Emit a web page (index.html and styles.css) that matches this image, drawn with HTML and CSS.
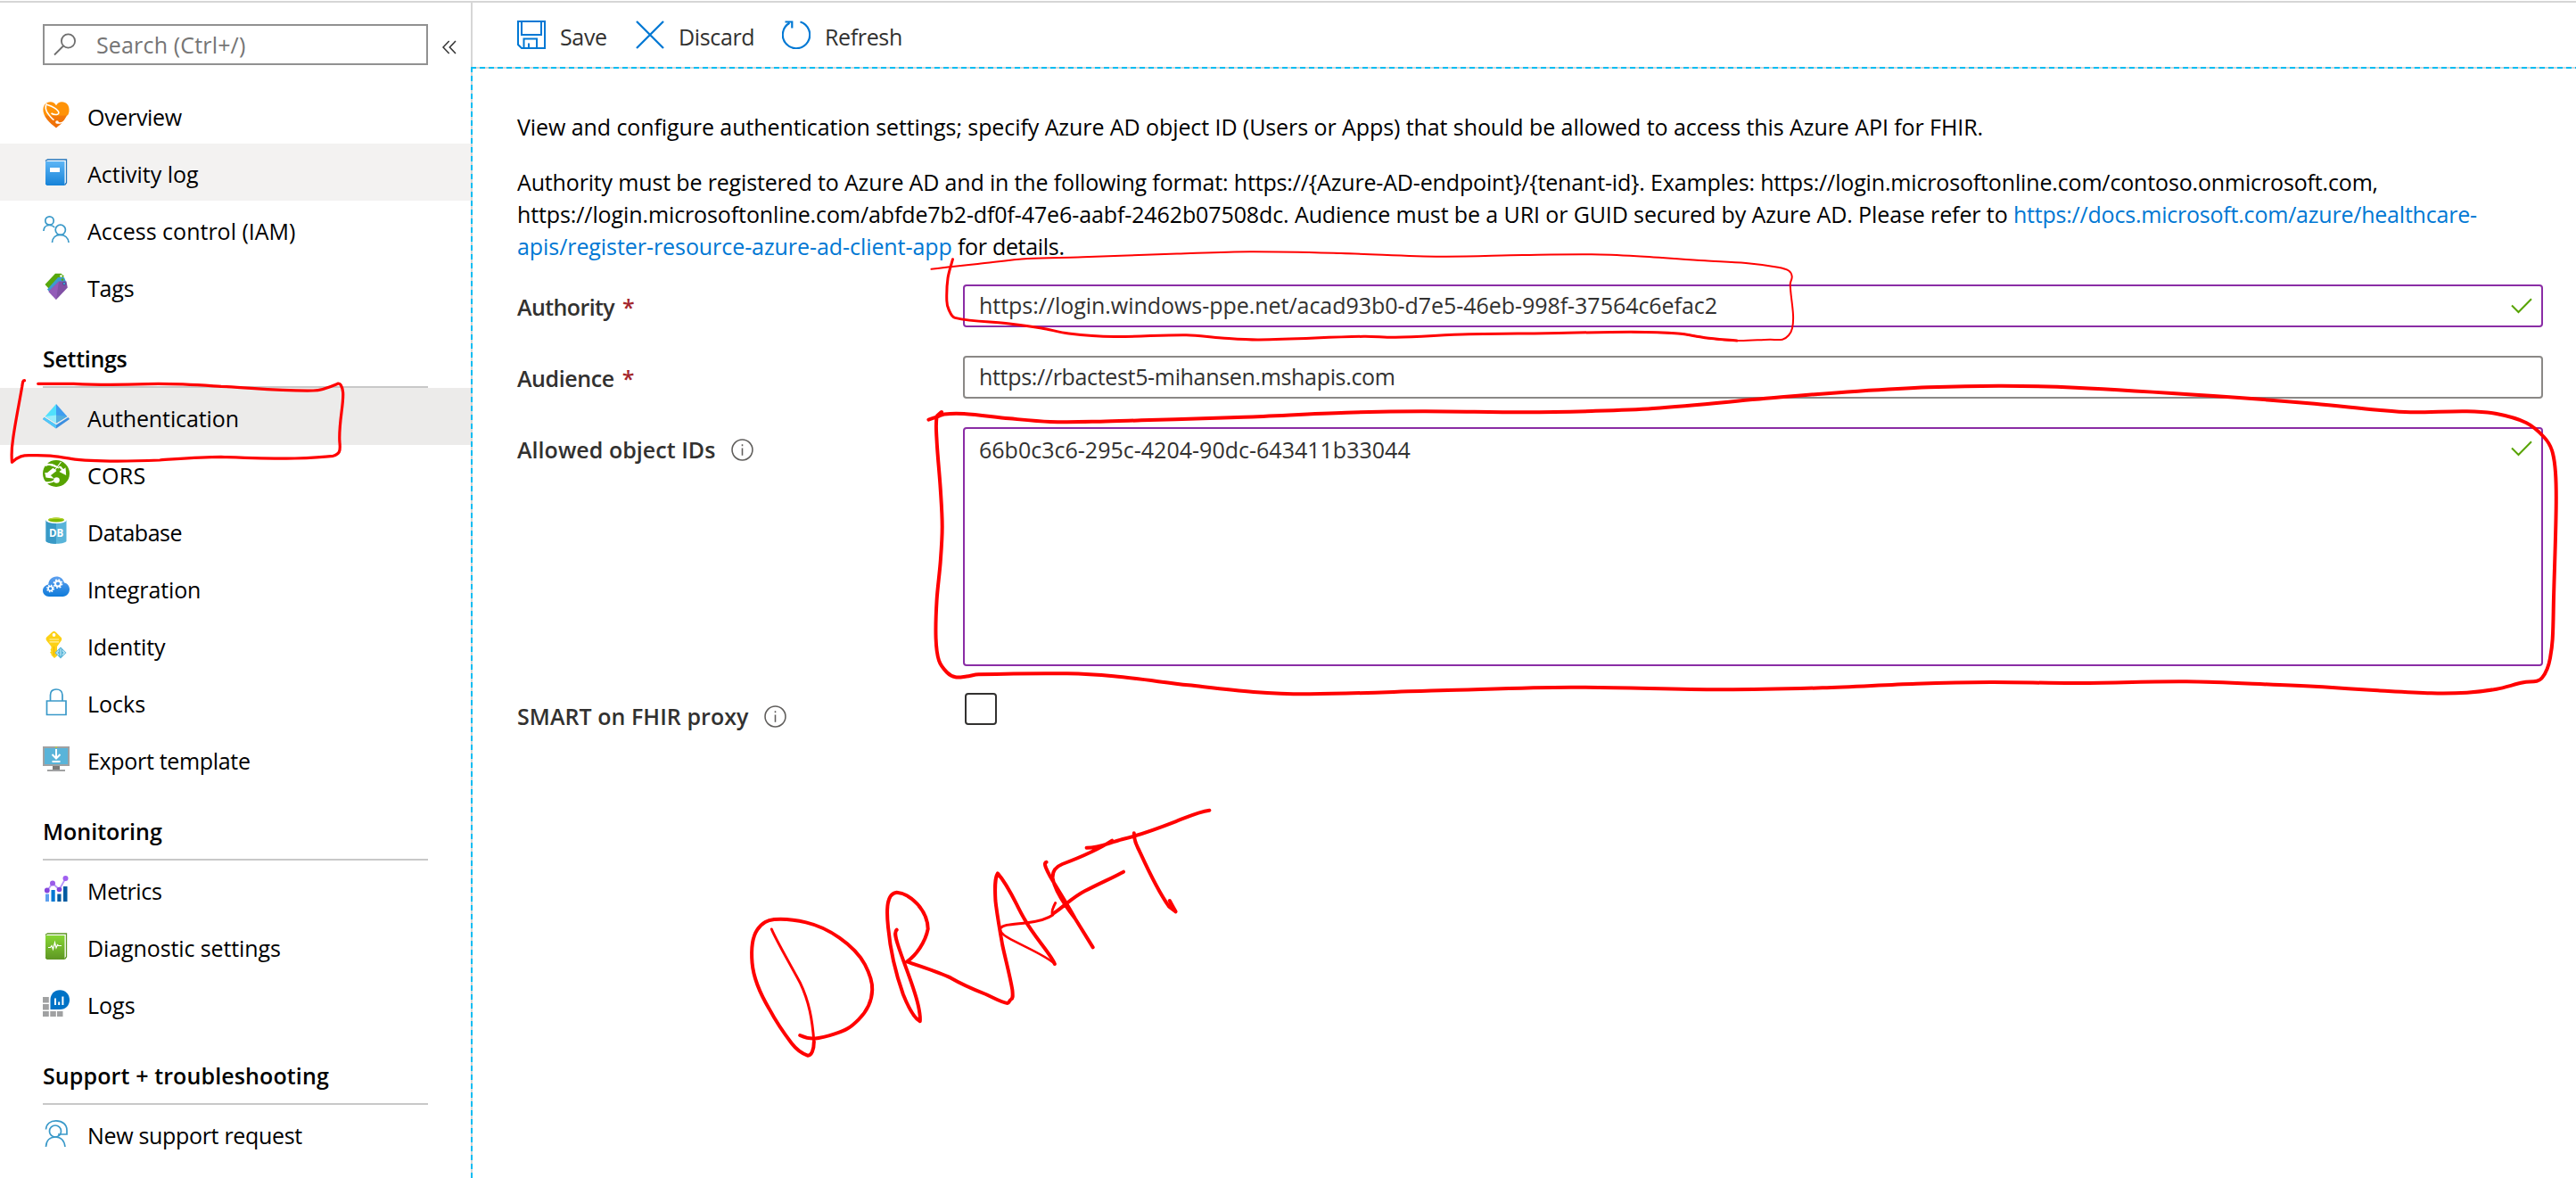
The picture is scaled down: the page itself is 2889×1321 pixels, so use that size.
FILE: index.html
```html
<!DOCTYPE html>
<html lang="en">
<head>
<meta charset="utf-8">
<title>Authentication</title>
<link rel="stylesheet" href="styles.css">
</head>
<body>
<div class="portal">
  <nav class="sidebar">
    <div class="search-row">
      <label class="search">
        <svg class="search-icon" viewBox="0 0 26 26" fill="none" stroke="#6e6e6e" stroke-width="1.8"><circle cx="16.5" cy="9" r="7.6"/><path d="M11 14.5L1 24.5"/></svg>
        <input class="search-input" type="text" placeholder="Search (Ctrl+/)">
      </label>
      <svg class="collapse" viewBox="0 0 16 16" fill="none" stroke="#333" stroke-width="1.5"><path d="M7.7 1L1 8l6.700 7M15 1L8.300 8l6.700 7"/></svg>
    </div>

    <a class="item tight"><svg class="icon" viewBox="0 0 30 30"><defs><linearGradient id="heart" x1="0" y1="0" x2="0" y2="1"><stop offset=".5" stop-color="#ff9308"/><stop offset=".55" stop-color="#f27a0c"/><stop offset="1" stop-color="#ee6c04"/></linearGradient></defs><path d="M15 29.500C12 27 2 20 .6 11.500-.5 4 4 .3 8.500.3c3 0 5 1.500 6.500 4 1.500-2.500 3.500-4 6.500-4 4.500 0 9 3.700 7.900 11.200C28 20 18 27 15 29.500z" fill="url(#heart)"/><path d="M4.500 2c-3 5-.5 9.500 2.500 13s3.500 4.500 5.500 5.500M5 3.500c5 1.500 9.500 3 12.500 7.500 2 4-4.500 4.500-8 2" fill="none" stroke="#fff" stroke-width="1.600"/><path d="M16 23.500c5 1.500 8-1 9.500-4s2.500-4 4-4.500" fill="none" stroke="#fff" stroke-width="1.500"/><circle cx="16" cy="23" r="1.800" fill="#fff"/></svg>Overview</a>

    <a class="item hover"><svg class="icon" viewBox="0 0 30 30"><defs><linearGradient id="book" x1="0" y1="0" x2="0" y2="1"><stop offset="0" stop-color="#5db5f5"/><stop offset="1" stop-color="#1683d8"/></linearGradient></defs><path d="M5 1h21.500v26l-2 2.500" fill="#fff" stroke="#2475bb" stroke-width="1.300"/><path d="M3 2.500L5 1" stroke="#2475bb" stroke-width="1.300"/><path d="M3 3h21.500v27H4.500L3 28.500z" fill="url(#book)"/><path d="M8 10h11v5H8z" fill="#fff"/></svg>Activity log</a>

    <a class="item"><svg class="icon" viewBox="0 0 30 30" fill="none" stroke="#3a99c9" stroke-width="1.700"><circle cx="7.500" cy="5.500" r="4.700"/><path d="M.9 17c0-4 2.800-6.500 6.500-6.500 2.500 0 4.500 1 5.800 2.500"/><circle cx="19.800" cy="15.800" r="5.600"/><path d="M10.500 30c.3-5.500 4-8.600 9-8.600s9 3.100 9.600 8.600"/></svg>Access control (IAM)</a>

    <a class="item tags"><svg class="icon" viewBox="0 0 30 30"><path d="M2.500 13L14 .7h6.500l3.500 3L7 18z" fill="#58a80c"/><path d="M5 18.500L17 5l7 0 2 5L9 23z" fill="#3c9bd0"/><path d="M6.500 21L18 9.500h8.500l1.300 7L15 30z" fill="#8150a5"/><path d="M6.500 21L18 9.500l-3 20.500z" fill="#935bb8"/><circle cx="20.500" cy="3.500" r="1.300" fill="#fff"/><circle cx="22" cy="7.500" r="1.300" fill="#58a80c"/><circle cx="24" cy="12" r="1.700" fill="#3c9bd0" stroke="#54347a" stroke-width=".6"/></svg>Tags</a>

    <h2 class="section settings">Settings</h2>
    <a class="item active snug"><svg class="icon" viewBox="0 0 30 30"><path d="M15 24.500L1.500 16 0 18l15 10.500L30 18l-1.500-2z" fill="#3d8fe0"/><path d="M15 24.500L1.500 16 0 18l15 10.500z" fill="#50c8f8"/><path d="M15 1v21.500L2.700 15z" fill="#50e0fc"/><path d="M15 1l12.300 14L15 22.500z" fill="#3f9df0"/><path d="M15 13.500V22.500L2.700 15z" fill="#98ecfb"/><path d="M15 13.500l12.300 1.500L15 22.500z" fill="#54aede"/></svg>Authentication</a>

    <a class="item cors"><svg class="icon" viewBox="0 0 30 30"><circle cx="15" cy="15" r="15" fill="#57a300"/><path d="M3 4.500C9 4 14 5.500 18 9M12 13l8.500-11M3 14.500l1 4.500 7 1-3-3 6.500-5-3-2.500-6 5zM18 7l4 4-2.500 2 6 3-.5-6.500-2 1.500-3.500-4" fill="#fff" stroke="#fff" stroke-width="1.200"/><circle cx="15.500" cy="22.500" r="3.300" fill="#fff"/><path d="M1 24.500c5 1.500 9 .5 13-2M3 6c4-2 9-1 12 1.500" fill="none" stroke="#fff" stroke-width="2"/></svg>CORS</a>

    <a class="item tighter"><svg class="icon" viewBox="0 0 30 30"><path d="M3.500 3.500v23c0 1.800 5 3.300 11.500 3.300s11.500-1.500 11.500-3.300v-23z" fill="#59b4d9"/><path d="M3.500 3.500v23c0 1.800 5 3.300 11.500 3.300v-26z" fill="#3999c6"/><ellipse cx="15" cy="3.500" rx="11.500" ry="3.500" fill="#fff"/><ellipse cx="15" cy="3" rx="9" ry="2.600" fill="#7fba00"/><path d="M6 3c0-1.500 4-2.600 9-2.600S24 1.500 24 3c-4-1.400-14-1.400-18 0z" fill="#b8d432"/><text x="15" y="21.500" class="db-text">DB</text></svg>Database</a>

    <a class="item snug"><svg class="icon" viewBox="0 0 30 30"><defs><linearGradient id="cloud" x1="0" y1="0" x2="0" y2="1"><stop offset="0" stop-color="#5ea0ef"/><stop offset="1" stop-color="#0f7bda"/></linearGradient></defs><path d="M7 25c-4 0-7-3-7-6.500 0-4 3-6.500 6.300-7C6.500 6 10.500 2.500 15.300 2.500c4.200 0 7.500 2.600 8.700 7 3.500.5 6 3.500 6 7.300 0 4.400-3.300 8.200-7.500 8.200z" fill="url(#cloud)"/><g fill="none" stroke="#fff"><circle cx="17" cy="10.500" r="3" stroke-width="2"/><circle cx="17" cy="10.500" r="4.600" stroke-width="1.600" stroke-dasharray="1.800 1.800"/><circle cx="8.500" cy="16" r="2.500" stroke-width="1.700"/><circle cx="8.500" cy="16" r="3.800" stroke-width="1.400" stroke-dasharray="1.500 1.500"/></g></svg>Integration</a>

    <a class="item snug"><svg class="icon" viewBox="0 0 30 30"><path d="M12.500 0c1 0 1.500.4 2.500 1.300l5.500 5.500c1 1 1 2.500 0 4L16 17v10.500L13 30l-3.500-3.500V25L8 23.700l1.500-1.500-1-1.500 1-1.700V17L4.300 10.500c-1-1.500-1-3 0-4L10 1.300C11 .4 11.500 0 12.500 0z" fill="#fcd116"/><circle cx="12.500" cy="4" r="1.900" fill="#fff"/><path d="M7.500 9h10.500M7.500 11.800h10.500" stroke="#fff1a8" stroke-width="1.200"/><path d="M12.500 17v10" stroke="#f5b400"/><path d="M20 17.500l6.500 6.500-6.500 6.500-6.500-6.500z" fill="#59b4d9"/><path d="M20 19.500v8M18 21.500L15.500 24l2.500 2.500M22 21.500l2.500 2.500-2.500 2.500" fill="none" stroke="#c7ebf5" stroke-width="1.100"/></svg>Identity</a>

    <a class="item"><svg class="icon" viewBox="0 0 30 30" fill="none" stroke="#3a99c9" stroke-width="1.700"><path d="M4.500 14h21.500v15.500H4.500zM8.500 14V7.500C8.500 3.500 11 1 15 1s7 2.500 7 6.500V14"/></svg>Locks</a>

    <a class="item tight"><svg class="icon" viewBox="0 0 30 30"><path d="M0 1h30v22H0z" fill="#a0a1a2"/><path d="M2 3h26v18H2z" fill="#59b4d9"/><path d="M11 23h8v4h-8z" fill="#7a7a7a"/><path d="M5 27h20v2H5z" fill="#a0a1a2"/><path d="M15 4v10M10.500 10l4.500 4.500 4.500-4.500" fill="none" stroke="#fff" stroke-width="2"/><path d="M10.500 18h9" stroke="#fff" stroke-width="2"/><circle cx="15" cy="2" r=".9" fill="#b8d432"/></svg>Export template</a>

    <h2 class="section">Monitoring</h2>
    <a class="item tight"><svg class="icon" viewBox="0 0 30 30"><path d="M3 20.500h4V29H3z" fill="#5ea0ef"/><path d="M9.500 16h4.200v13H9.500z" fill="#0078d4"/><path d="M16.300 20.500h4.200V29h-4.200zM23 12h4.500v17H23z" fill="#005ba1"/><path d="M5 16.500L11 8.500l7.500 7L25.500 3" fill="none" stroke="#b796f9" stroke-width="1.800"/><g fill="#8646dd"><circle cx="4.800" cy="16.500" r="2.900"/><circle cx="11" cy="8.500" r="3" fill="#9a5ce8"/><circle cx="18.500" cy="15.500" r="2.800"/><circle cx="25.500" cy="3" r="3" fill="#a05ff0"/></g></svg>Metrics</a>

    <a class="item snug"><svg class="icon" viewBox="0 0 30 30"><defs><linearGradient id="diag" x1="0" y1="0" x2="0" y2="1"><stop offset="0" stop-color="#86d633"/><stop offset="1" stop-color="#5e9624"/></linearGradient></defs><path d="M5 1h21.500v26l-2 2.500" fill="#fff" stroke="#5e9624" stroke-width="1.300"/><path d="M3 2.500L5 1" stroke="#5e9624" stroke-width="1.300"/><path d="M3 3h21.500v27H4.500L3 28.500z" fill="url(#diag)"/><path d="M6 16.500h2.500l1.500-2 1.500 4 2-7.500 1.500 6 1.500-3.500 1 1H21" fill="none" stroke="#fff" stroke-width="1.200"/></svg>Diagnostic settings</a>

    <a class="item"><svg class="icon" viewBox="0 0 30 30"><path d="M0 8h6.800v6.500H0zM0 16h6.800v6.500H0zM0 24h6.800v6H0zM8.300 24h6.500v6H8.300zM16 24h6.500v6H16z" fill="#a0a1a2"/><path d="M8.500 22V11C8.500 5 13 .3 19.200.3S30 5 30 11.200 25.500 22 19.500 22z" fill="#0072c6"/><path d="M14 9.500v7.500M18.200 13.500V17M22.400 7.500V17" stroke="#fff" stroke-width="2"/></svg>Logs</a>

    <h2 class="section support">Support + troubleshooting</h2>
    <a class="item tight"><svg class="icon" viewBox="0 0 30 30" fill="none" stroke="#3a99c9" stroke-width="1.700"><path d="M3.500 10.500C4 4.500 8.500.9 14.800.9 22 .9 27 5 27 11.500v4.500H17"/><circle cx="14" cy="12.500" r="6.500"/><path d="M3.500 30c.3-7 4.500-11 10.700-11S24 23 25 30"/></svg>New support request</a>
  </nav>

  <main class="main">
    <div class="toolbar">
      <button class="command"><svg class="command-icon" viewBox="0 0 32 32" fill="none" stroke="#0078d4" stroke-width="2"><path d="M1 1h30v30H5l-4-4zM5 1v15h22V1M7.500 31V20.500h14.500V31M13 31v-5.500"/></svg>Save</button>
      <button class="command"><svg class="command-icon" viewBox="0 0 32 32" fill="none" stroke="#0078d4" stroke-width="2.300"><path d="M1 1l30 30M31 1L1 31"/></svg>Discard</button>
      <button class="command"><svg class="command-icon" viewBox="0 0 32 32" fill="none" stroke="#0078d4" stroke-width="2.200"><path d="M20.500 1.500A15.200 15.200 0 1 1 8.500 2.800M3.500 1.500h7.800v7"/></svg>Refresh</button>
    </div>

    <section class="panel">
      <p class="intro">View and configure authentication settings; specify Azure AD object ID (Users or Apps) that should be allowed to access this Azure API for FHIR.</p>
      <p class="details"><span class="line-a">Authority must be registered to Azure AD and in the following format: https://{Azure-AD-endpoint}/{tenant-id}. Examples: https://login.microsoftonline.com/contoso.onmicrosoft.com,</span><br><span class="line-b">https://login.microsoftonline.com/abfde7b2-df0f-47e6-aabf-2462b07508dc. Audience must be a URI or GUID secured by Azure AD. Please refer to </span><a class="link link-a">https://docs.microsoft.com/azure/healthcare-</a><br><a class="link link-b">apis/register-resource-azure-ad-client-app</a> for details.</p>

      <div class="form">
        <label class="label authority">Authority<span class="required">*</span></label>
        <div class="field"><input class="input edited authority-value" value="https://login.windows-ppe.net/acad93b0-d7e5-46eb-998f-37564c6efac2"><svg class="valid" viewBox="0 0 24 18"><path d="M1 8.500l7.500 7.500L23 1.300"/></svg></div>

        <label class="label audience">Audience<span class="required">*</span></label>
        <div class="field"><input class="input audience-value" value="https://rbactest5-mihansen.mshapis.com"></div>

        <label class="label allowed">Allowed object IDs<svg class="info" viewBox="0 0 24 24"><circle cx="12" cy="12" r="11"/><path d="M12 10v8M12 6v2"/></svg></label>
        <div class="field"><textarea class="input edited object-ids">66b0c3c6-295c-4204-90dc-643411b33044</textarea><svg class="valid" viewBox="0 0 24 18"><path d="M1 8.500l7.500 7.500L23 1.300"/></svg></div>

        <label class="label smart">SMART on FHIR proxy<svg class="info" viewBox="0 0 24 24"><circle cx="12" cy="12" r="11"/><path d="M12 10v8M12 6v2"/></svg></label>
        <div class="field check-field"><input class="checkbox" type="checkbox"></div>
      </div>
    </section>
  </main>

  <svg class="ink" viewBox="0 0 2889 1321">
    <g class="ink-box" stroke-width="3.200" transform="translate(0 360) scale(.34436 .33333)">
      <path d="M80 200C74 200 74 205 72 220 62 280 48 350 42 400 36 440 38 460 39 475 60 455 75 451 100 452 150 450 180 455 230 463 290 472 420 472 520 468 590 463 650 457 720 457 800 460 900 463 960 462 1020 460 1060 457 1085 454 1105 448 1110 440 1106 405 1103 340 1120 280 1117 240 1115 220 1108 210 1102 210 1075 222 1050 234 1020 234 900 236 800 222 720 220 640 215 560 209 480 212 400 215 320 216 240 211L124 211"/>
    </g>
    <g class="ink-box" stroke-width="4" transform="translate(820 880) scale(.35714 .33333)">
      <path stroke-width="3" d="M127 486C140 520 165 565 216 665 245 730 255 790 260 865"/>
      <path d="M260 865C260 892 252 912 240 911 225 905 208 895 190 870 165 835 145 805 120 755 95 710 70 650 66 600 62 550 68 510 82 488 98 462 115 456 135 453 170 450 200 454 235 463 275 473 310 492 340 515 380 545 405 575 420 605 437 640 444 665 443 690 442 730 428 760 400 790 375 817 360 827 325 838 300 847 280 852 260 854 243 854 230 850 216 843"/>
      <path d="M520 488C512 495 515 510 524 540 545 610 575 680 588 745 593 770 594 785 593 796 575 785 555 745 540 705 515 630 500 560 493 480 487 420 488 365 520 362 560 365 617 420 618 485 610 530 580 575 552 595 590 610 650 630 690 650 730 675 760 688 800 705 830 720 850 733 868 735 873 735 873 726 878 723 885 720 885 712 883 690 875 640 862 590 852 540 842 480 834 430 830 390 828 350 827 315 837 298 875 345 895 405 920 450 950 510 1005 570 1016 603"/>
      <path stroke-width="2.500" d="M1016 603C990 575 910 540 870 515 850 503 842 490 846 482"/>
      <path stroke-width="3" d="M846 482C855 470 880 470 930 464 960 460 995 450 1010 438M1018 398C1010 415 1004 430 1010 434"/>
      <path d="M1010 434C1040 415 1070 380 1110 358 1150 335 1200 312 1232 293M990 260C980 262 988 280 1000 305 1030 360 1060 410 1080 450L1136 547M1196 188C1150 220 1100 243 1040 267 1015 278 1008 295 1010 315 1015 350 1040 395 1080 450M1116 212C1160 212 1180 197 1230 183 1290 168 1340 147 1400 122 1440 105 1470 90 1502 86M1265 163C1265 195 1275 205 1285 230 1315 300 1345 365 1375 410L1396 427 1377 390"/>
    </g>
    <path stroke-width="2" data-points="1044.5,301.8 1068,299 1096.5,296 1152.7,290 1208.8,288.5 1320,284.6 1402,282.3 1504,284 1616,287.7 1708,286 1785,285.3 1835.7,287.3 1912,292.3 1958,295 1994,299.7 2006,303.5 2009.7,310 2007.7,319 2011,353.3 2010,368 2006,376 1999,380.7 1985,380.7 1948,382 1912,378.7 1882,374 1830.6,372.3"/>
    <path stroke-width="3" data-points="1948,382 1912,378.7 1882,374 1830.6,372.3 1733.7,373.7 1647,374.7 1565,378.3 1529.6,377.3 1412,381 1370,379 1330.6,375.7 1249.6,377.5 1198.6,374 1168,367.9 1132,362.9 1071,356.4 1064,347 1061.800,337 1063,312 1068.5,290.7"/>
    <path stroke-width="4" data-points="1041.4,470.7 1052,467 1059,464.4 1081,464 1132,469.3 1178,472.9 1234,472.7 1280,471.3 1395,467.7 1509.6,462.7 1595.7,461.3 1710.5,462.3 1785,461 1854,458 1997.6,445.3 2083.7,438.7 2162.6,434.3 2245,432.7 2327.7,434.7 2482.5,444 2596,452.7 2666.7,459.7 2703,462.3 2766.7,461.3 2800,464 2833,474 2853,490 2862,505 2866,530 2866.7,570 2864,670 2862.7,716.7 2860,738 2856.7,750 2851,760 2845,763.7 2830,765.3 2800,772.7 2766.7,776.7 2726.7,777.3 2666.7,774.3 2600,770 2556.7,768 2452,764.3 2326.6,766 2232.5,765 2149,766.7 2044,771.3 1929,773.3 1762,770.7 1615,774.3 1469,778.3 1406,776 1333,768.3 1249,758.3 1197,755.3 1097.5,756.3 1084,758.5 1071.4,759.3 1062,754 1053,740.7 1049.6,715.7 1050.6,673 1054.7,630 1056.7,590.7 1054.7,548 1050.6,494 1050.6,467.5 1056,462"/>
  </svg>
</div>
<script src="ink.js"></script>
</body>
</html>
```
FILE: ink.js
```js
// Turns each pen stroke's sampled points into a smooth curve (Catmull-Rom to Bezier).
document.querySelectorAll('[data-points]').forEach(function (path) {
  var p = path.dataset.points.split(' ').map(function (s) { return s.split(',').map(Number); });
  var d = 'M' + p[0];
  for (var i = 0; i < p.length - 1; i++) {
    var a = p[i - 1] || p[i], b = p[i], c = p[i + 1], e = p[i + 2] || c;
    var len = Math.hypot(c[0] - b[0], c[1] - b[1]);
    var handle = function (from, to, sign, at) {
      var span = Math.hypot(to[0] - from[0], to[1] - from[1]) || 1;
      var k = sign * len / 3 / span;
      return [at[0] + (to[0] - from[0]) * k, at[1] + (to[1] - from[1]) * k];
    };
    d += 'C' + [handle(a, c, 1, b), handle(b, e, -1, c), c].join(' ');
  }
  path.setAttribute('d', d);
});
```
FILE: styles.css
```css
* { box-sizing: border-box; }

body {
  margin: 0;
  padding-top: 1px;
  background: #fff;
  color: #000;
  font: 25px/34px "Open Sans", "Noto Sans", sans-serif;
  overflow: hidden;
}

input, textarea, button { font: inherit; }

.portal {
  position: relative;
  display: flex;
  width: 2889px;
  height: 1320px;
  border-top: 2px solid #d6d6d6;
}

/* Sidebar */
.sidebar { width: 528px; flex: none; padding-top: 24px; }

.search-row {
  display: flex;
  align-items: center;
  gap: 16px;
  margin: 0 0 24px 48px;
}

.search {
  display: flex;
  align-items: center;
  width: 432px;
  height: 46px;
  padding-left: 10px;
  border: 2px solid #919191;
}

.search-icon { width: 26px; height: 26px; flex: none; }

.search-input {
  width: 340px;
  height: 42px;
  margin-left: 22px;
  padding: 0;
  border: 0;
  outline: 0;
  background: none;
  letter-spacing: .16px;
}

.search-input::placeholder { color: #757575; opacity: 1; }

.collapse { width: 16px; height: 16px; margin-top: 6px; }

.item {
  display: flex;
  align-items: center;
  gap: 20px;
  height: 64px;
  padding: 3px 0 0 48px;
  line-height: 34px;
}

.icon { width: 30px; height: 30px; flex: none; margin-top: -3px; overflow: visible; }

.hover { background: #f3f2f1; }
.active { background: #ecebea; }
.snug { letter-spacing: -.11px; }
.tight { letter-spacing: -.32px; }
.tighter { letter-spacing: -.49px; }
.cors { letter-spacing: .29px; }
.tags { letter-spacing: -.2px; }

.db-text {
  font: 700 11.500px "Open Sans", sans-serif;
  letter-spacing: 0;
  fill: #fff;
  text-anchor: middle;
}

.section {
  height: 82px;
  margin: 0 48px;
  padding-top: 32px;
  border-bottom: 2px solid #c8c8c8;
  font-size: 25px;
  font-weight: 600;
  line-height: 34px;
}

.settings { letter-spacing: -.3px; }
.support { letter-spacing: .12px; }

/* Toolbar */
.main { flex: 1; display: flex; flex-direction: column; }

.toolbar {
  display: grid;
  grid-template-columns: 133px 164px auto;
  height: 72px;
  padding-left: 50px;
  border-left: 2px solid #d6d6d6;
}

.command {
  display: flex;
  align-items: center;
  gap: 16px;
  padding: 3px 0 0;
  border: 0;
  background: none;
  color: #323130;
  letter-spacing: -.36px;
}

.command-icon { width: 32px; height: 32px; margin-top: -3px; }

/* Content panel, framed by a dashed focus outline */
.panel {
  flex: 1;
  padding: 49px 37px 0 52px;
  background:
    repeating-linear-gradient(90deg, #00bcf2 0 6px, #d6d6d6 6px 10px) 0 0 / 100% 2px no-repeat,
    repeating-linear-gradient(180deg, #00bcf2 0 6px, #d6d6d6 6px 10px) 0 0 / 2px 100% no-repeat;
}

.intro { margin: 0 0 26px; line-height: 36px; letter-spacing: -.08px; }
.details { margin: 0 0 25px; line-height: 36px; letter-spacing: -.3px; white-space: nowrap; }
.line-a { letter-spacing: -.158px; }
.line-b { letter-spacing: -.108px; }
.link { color: #0078d4; }
.link-a { letter-spacing: -.214px; }
.link-b { letter-spacing: -.067px; }

.form {
  display: grid;
  grid-template-columns: 500px 1772px;
  grid-template-rows: 48px 48px 268px 36px;
  row-gap: 32px;
  color: #323130;
}

.label {
  display: flex;
  align-items: flex-start;
  height: 50px;
  font-weight: 600;
  line-height: 50px;
}

.authority { letter-spacing: -.6px; }
.audience { letter-spacing: -.42px; }
.allowed { letter-spacing: .04px; }
.smart { letter-spacing: .05px; }
.required { margin-left: 9px; color: #a4262c; }

.info {
  width: 25px;
  height: 25px;
  margin: 13px 0 0 18px;
  fill: none;
  stroke: #605e5c;
  stroke-width: 1.500;
}

.field { position: relative; display: flex; }

.input {
  width: 100%;
  height: 48px;
  margin: 0;
  padding: 0 60px 2px 16px;
  border: 2px solid #8a8886;
  border-radius: 4px;
  outline: 0;
  background: #fff;
  color: #323130;
  resize: none;
}

.edited { border-color: #8a2da5; }
.authority-value { letter-spacing: -.04px; }
.audience-value { letter-spacing: -.33px; }
.object-ids { height: 268px; padding-top: 5px; line-height: 36px; letter-spacing: .01px; }

.valid {
  position: absolute;
  top: 15px;
  right: 12px;
  width: 24px;
  height: 18px;
  fill: none;
  stroke: #57a300;
  stroke-width: 2;
}

.smart { margin-top: -1px; }
.check-field { margin-top: -2px; }

.checkbox {
  appearance: none;
  width: 36px;
  height: 36px;
  margin: 0 0 0 2px;
  border: 2px solid #323130;
  border-radius: 4px;
  background: #fff;
}

/* Handwritten markup drawn over the page */
.ink {
  position: absolute;
  top: -3px;
  left: 0;
  width: 2889px;
  height: 1321px;
  fill: none;
  stroke: #f00;
  stroke-linecap: round;
  stroke-linejoin: round;
  pointer-events: none;
}

.ink-box path { vector-effect: non-scaling-stroke; }
```
